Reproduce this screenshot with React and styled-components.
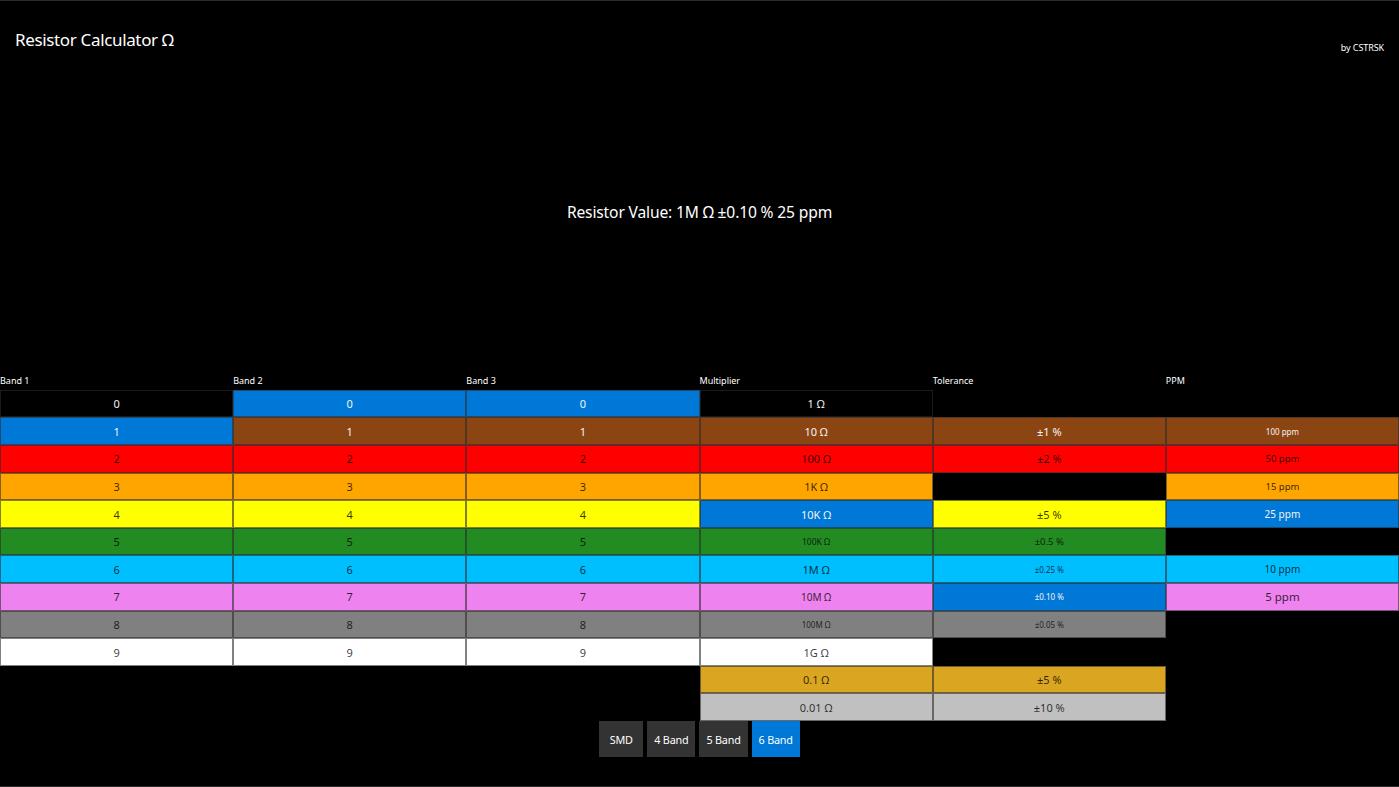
import React from "react";
import styled, { createGlobalStyle } from "styled-components";

const GlobalStyle = createGlobalStyle`
  * { box-sizing: border-box; }
  html, body {
    margin: 0;
    padding: 0;
    background: #000;
  }
  body {
    font-family: "Noto Sans", "Open Sans", sans-serif;
    color: #fff;
  }
`;

const ACCENT = "#0078d7";

const BAND_COLORS = [
  "#000000",
  "#8b4513",
  "#ff0000",
  "#ffa500",
  "#ffff00",
  "#228b22",
  "#00bfff",
  "#ee82ee",
  "#808080",
  "#ffffff",
  "#daa520",
  "#c0c0c0",
];

const LIGHT_TEXT = ["#000000", "#8b4513", ACCENT];

const Page = styled.div`
  width: 100%;
  height: 787px;
  display: flex;
  flex-direction: column;
  border-top: 1px solid #2b2b2b;
  border-bottom: 1px solid #2b2b2b;
  overflow: hidden;
`;

const TopBar = styled.header`
  height: 79px;
  display: flex;
  justify-content: space-between;
  align-items: flex-start;
  padding: 27px 15px 0 15px;
`;

const Title = styled.h1`
  margin: 0;
  font-size: 17px;
  font-weight: 400;
  line-height: 24px;
  letter-spacing: -0.35px;
`;

const Byline = styled.span`
  font-size: 9px;
  line-height: 14px;
  margin-top: 13px;
  letter-spacing: -0.1px;
`;

const Result = styled.div`
  height: 264px;
  display: flex;
  align-items: center;
  justify-content: center;
  font-size: 15.6px;
  letter-spacing: -0.15px;
`;

const Board = styled.section`
  margin-top: auto;
  margin-bottom: 29px;
  display: flex;
  flex-direction: column;
`;

const Grid = styled.div`
  display: grid;
  grid-template-columns: repeat(6, 1fr);
`;

const Column = styled.div`
  display: flex;
  flex-direction: column;
`;

const Label = styled.div`
  height: 18px;
  font-size: 9px;
  line-height: 18px;
  white-space: nowrap;
`;

const Cell = styled.button`
  height: 27.6px;
  margin: 0;
  padding: 0;
  border: 1px solid rgba(45, 45, 45, 0.6);
  background: ${(p) => p.$bg};
  color: ${(p) => (p.$light ? "#f4f4f4" : "rgba(0, 0, 0, 0.78)")};
  font-family: "Noto Sans", "Open Sans", sans-serif;
  font-size: ${(p) => p.$size || 11}px;
  display: flex;
  align-items: center;
  justify-content: center;
  cursor: pointer;
`;

const Empty = styled.div`
  height: 27.6px;
`;

const Modes = styled.div`
  display: flex;
  justify-content: center;
  gap: 4px;
`;

const ModeButton = styled.button`
  height: 36px;
  min-width: 44px;
  padding: 0 7px;
  border: none;
  background: ${(p) => (p.$active ? ACCENT : "#333333")};
  color: #fff;
  font-family: "Noto Sans", "Open Sans", sans-serif;
  font-size: 10.8px;
  letter-spacing: -0.2px;
  cursor: pointer;
`;

const digits = (selected) =>
  Array.from({ length: 10 }, (_, i) => ({
    text: String(i),
    color: i,
    selected: i === selected,
  }));

const columns = [
  { label: "Band 1", cells: digits(1) },
  { label: "Band 2", cells: digits(0) },
  { label: "Band 3", cells: digits(0) },
  {
    label: "Multiplier",
    cells: [
      { text: "1 Ω", color: 0 },
      { text: "10 Ω", color: 1 },
      { text: "100 Ω", color: 2 },
      { text: "1K Ω", color: 3 },
      { text: "10K Ω", color: 4, selected: true },
      { text: "100K Ω", color: 5, size: 8.5 },
      { text: "1M Ω", color: 6 },
      { text: "10M Ω", color: 7, size: 10 },
      { text: "100M Ω", color: 8, size: 8 },
      { text: "1G Ω", color: 9 },
      { text: "0.1 Ω", color: 10 },
      { text: "0.01 Ω", color: 11 },
    ],
  },
  {
    label: "Tolerance",
    cells: [
      null,
      { text: "±1 %", color: 1 },
      { text: "±2 %", color: 2 },
      null,
      { text: "±5 %", color: 4 },
      { text: "±0.5 %", color: 5, size: 9.5 },
      { text: "±0.25 %", color: 6, size: 8 },
      { text: "±0.10 %", color: 7, size: 8, selected: true },
      { text: "±0.05 %", color: 8, size: 8 },
      null,
      { text: "±5 %", color: 10 },
      { text: "±10 %", color: 11 },
    ],
  },
  {
    label: "PPM",
    cells: [
      null,
      { text: "100 ppm", color: 1, size: 8 },
      { text: "50 ppm", color: 2, size: 9.5 },
      { text: "15 ppm", color: 3, size: 9.5 },
      { text: "25 ppm", color: 4, size: 10, selected: true },
      null,
      { text: "10 ppm", color: 6, size: 10 },
      { text: "5 ppm", color: 7, size: 11.5 },
    ],
  },
];

const modes = ["SMD", "4 Band", "5 Band", "6 Band"];

export default function App() {
  return (
    <>
      <GlobalStyle />
      <Page>
        <TopBar>
          <Title>Resistor Calculator Ω</Title>
          <Byline>by CSTRSK</Byline>
        </TopBar>
        <Result>Resistor Value: 1M Ω ±0.10 % 25 ppm</Result>
        <Board>
          <Grid>
            {columns.map((col) => (
              <Column key={col.label}>
                <Label>{col.label}</Label>
                {col.cells.map((cell, i) => {
                  if (!cell) return <Empty key={i} />;
                  const bg = cell.selected ? ACCENT : BAND_COLORS[cell.color];
                  return (
                    <Cell
                      key={i}
                      $bg={bg}
                      $light={LIGHT_TEXT.includes(bg)}
                      $size={cell.size}
                    >
                      {cell.text}
                    </Cell>
                  );
                })}
              </Column>
            ))}
          </Grid>
          <Modes>
            {modes.map((m) => (
              <ModeButton key={m} $active={m === "6 Band"}>
                {m}
              </ModeButton>
            ))}
          </Modes>
        </Board>
      </Page>
    </>
  );
}
